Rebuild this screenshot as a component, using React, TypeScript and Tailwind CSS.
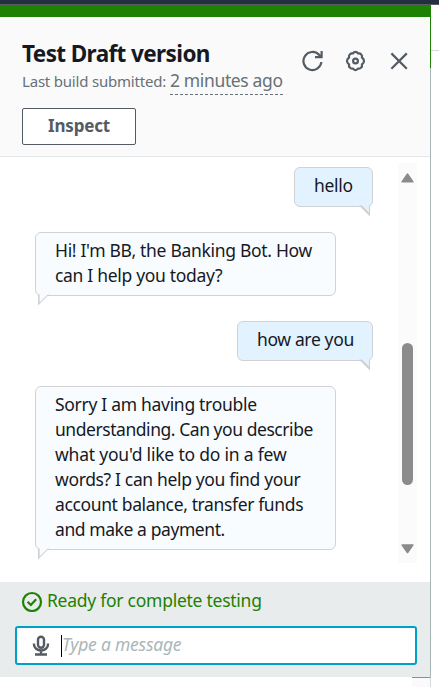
import type { ReactNode } from "react";

type Line = { text: string; cls: string };

function Bubble({ mine, lines, box }: { mine?: boolean; lines: Line[]; box: string }) {
  return (
    <div
      className={`relative rounded-[6px] border border-[#d0d2d5] pl-[19px] ${box} ${
        mine ? "self-end bg-[#e2f3ff] pb-[7px] pt-[6px]" : "bg-[#f8fcff] py-[6px]"
      }`}
    >
      {lines.map((l) => (
        <div key={l.text} className={`h-[25px] whitespace-nowrap text-[17.5px] leading-[22px] ${l.cls}`}>
          {l.text}
        </div>
      ))}
      {mine ? (
        <svg className="absolute -bottom-[11px] right-[1px]" width="12" height="14" viewBox="0 0 12 14">
          <path d="M0 2.5H11V13.5Z" fill="#cdd0d3" />
          <path d="M2 0V1.5L10 9.5V2.5L11 0Z" fill="#e2f3ff" />
        </svg>
      ) : (
        <svg className="absolute -bottom-[11px] left-[2px]" width="12" height="14" viewBox="0 0 12 14">
          <path d="M0 2.5V13.5L11 2.5Z" fill="#cdd0d3" />
          <path d="M0 0L1.6 2.5V10.6L9.7 2.6V0Z" fill="#f8fcff" />
        </svg>
      )}
    </div>
  );
}

function Icon({ children }: { children: ReactNode }) {
  return (
    <svg width="22" height="22" viewBox="0 0 22 22" fill="none" stroke="#545b64" strokeWidth="2.2">
      {children}
    </svg>
  );
}

export default function App() {
  return (
    <div className="flex h-[687px] w-[439px] flex-col overflow-hidden bg-white font-['Noto_Sans','Open_Sans',sans-serif] text-[#16191f]">
      <div className="h-[5px] shrink-0 border-b border-[#545b64] bg-[#232f3e]" />
      <div className="flex h-[672px] shrink-0">
        <main className="flex w-[430px] flex-col">
          <div className="h-[12px] shrink-0 bg-[#1d8102]" />
          <header className="flex h-[140px] shrink-0 justify-between border-b border-[#e4e7e8] bg-[#fafafa] pl-[22px] pr-[20px]">
            <div className="flex flex-col">
              <h1 className="mt-[22px] h-[30px] whitespace-nowrap text-[22.5px] font-bold leading-[30px] tracking-[-0.6px]">Test Draft version</h1>
              <div className="flex h-[27px] items-start whitespace-nowrap text-[#687078]">
                <span className="w-[148px] text-[15px] leading-[24px] tracking-[-0.2px]">Last build submitted:</span>
                <span className="h-[26px] w-[113px] border-b border-dashed border-[#687078] text-[17.5px] leading-[22px] tracking-[-0.36px]">2 minutes ago</span>
              </div>
              <button className="mt-[12px] h-[37px] w-[114px] rounded-[2px] border border-[#545b64] bg-white pb-[2px] text-[17px] font-bold leading-[32px] tracking-[-0.2px] text-[#545b64]">
                Inspect
              </button>
            </div>
            <div className="mt-[33px] flex gap-[21px]">
              <Icon>
                <path d="M19.4 12A9 9 0 1 1 17 4.8L18.5 6.6M19.6 1V7.2H13" />
              </Icon>
              <Icon>
                <path
                  strokeLinejoin="round"
                  d="M8 3.5Q8.9 1.9 10.5 1.9Q12.1 1.9 13 3.5Q14.9 3 16.1 4.4Q17.5 5.6 16.9 7.5Q19 8.9 19 11Q19 13.1 16.9 14.5Q17.5 16.4 16.1 17.6Q14.9 19 13 18.5Q12.1 20.1 10.5 20.1Q8.9 20.1 8 18.5Q6.1 19 4.9 17.6Q3.5 16.4 4.1 14.5Q2 13.1 2 11Q2 8.9 4.1 7.5Q3.5 5.6 4.9 4.4Q6.1 3 8 3.5Z"
                />
                <circle cx="10.5" cy="11" r="2.4" />
              </Icon>
              <Icon>
                <path d="M3.4 3.4L18.8 18.8M18.8 3.4L3.4 18.8" />
              </Icon>
            </div>
          </header>
          <section className="flex h-[425px] shrink-0">
            <div className="ml-[35px] mt-[10px] flex w-[338px] flex-col items-start gap-[25px]">
              <Bubble mine box="w-[79px]" lines={[{ text: "hello", cls: "tracking-[-0.3px]" }]} />
              <Bubble
                box="w-[301px]"
                lines={[
                  { text: "Hi! I'm BB, the Banking Bot. How", cls: "tracking-[-0.31px]" },
                  { text: "can I help you today?", cls: "tracking-[-0.31px]" },
                ]}
              />
              <Bubble mine box="w-[136px]" lines={[{ text: "how are you", cls: "tracking-[-0.36px]" }]} />
              <Bubble
                box="w-[301px]"
                lines={[
                  { text: "Sorry I am having trouble", cls: "tracking-[-0.3px]" },
                  { text: "understanding. Can you describe", cls: "tracking-[-0.45px]" },
                  { text: "what you'd like to do in a few", cls: "tracking-[-0.2px]" },
                  { text: "words? I can help you find your", cls: "tracking-[-0.35px]" },
                  { text: "account balance, transfer funds", cls: "tracking-[-0.37px]" },
                  { text: "and make a payment.", cls: "tracking-[-0.42px]" },
                ]}
              />
            </div>
            <div className="ml-[25px] mt-[6px] flex h-[400px] w-[19px] flex-col items-center bg-[#fbfbfb]">
              <svg className="mt-[9px]" width="13" height="12" viewBox="0 0 13 12">
                <path d="M6.5 2.2L11.7 9.7H1.3Z" fill="#8b8b8b" stroke="#8b8b8b" strokeWidth="1.8" strokeLinejoin="round" />
              </svg>
              <div className="mt-[159px] h-[142px] w-[11px] rounded-full bg-[#8b8b8b]" />
              <svg className="mt-[57px]" width="13" height="12" viewBox="0 0 13 12">
                <path d="M6.5 10.4L11.7 3.1H1.3Z" fill="#8b8b8b" stroke="#8b8b8b" strokeWidth="1.8" strokeLinejoin="round" />
              </svg>
            </div>
          </section>
          <footer className="h-[95px] shrink-0 bg-[#e9eced] pl-[15px] pt-[8px]">
            <div className="flex h-[24px] items-start pl-[6px] text-[#1d8102]">
              <svg width="22" height="22" viewBox="0 0 22 22" fill="none" stroke="currentColor" strokeWidth="2.2">
                <circle cx="11" cy="12" r="9" />
                <path d="M6.6 11.8L9.8 15L15.2 9.3" />
              </svg>
              <span className="ml-[4px] whitespace-nowrap text-[17.5px] leading-[21px] tracking-[-0.26px]">Ready for complete testing</span>
            </div>
            <div className="mt-[12px] flex h-[39px] w-[402px] items-center rounded-[3px] border-2 border-[#00a1c9] bg-white pl-[15px]">
              <svg width="18" height="22" viewBox="0 0 18 22" fill="none" stroke="#545b64" strokeWidth="2.4">
                <rect x="6" y="1.7" width="6" height="11" rx="3" />
                <path d="M2 8.5V9.5A7 6 0 0 0 16 9.5V8.5M9 15.5V19.5M3 19.5H15" />
              </svg>
              <div className="ml-[11px] h-[22px] w-px bg-black" />
              <span className="mb-[3px] whitespace-nowrap text-[17.5px] italic leading-[22px] tracking-[-0.22px] text-[#aab7b8]">Type a message</span>
            </div>
          </footer>
        </main>
        <div className="flex w-px flex-col bg-[#aab7b8]">
          <div className="h-[63px] bg-[#1d8102]" />
        </div>
        <div className="flex-1">
          <div className="h-[46px] border-b border-[#d5dbdb]" />
        </div>
      </div>
      <div className="ml-[412px] h-[10px] w-[19px] border-r border-t border-r-[#d5dbdb] border-t-[#879196] bg-[#fafafa]" />
    </div>
  );
}
